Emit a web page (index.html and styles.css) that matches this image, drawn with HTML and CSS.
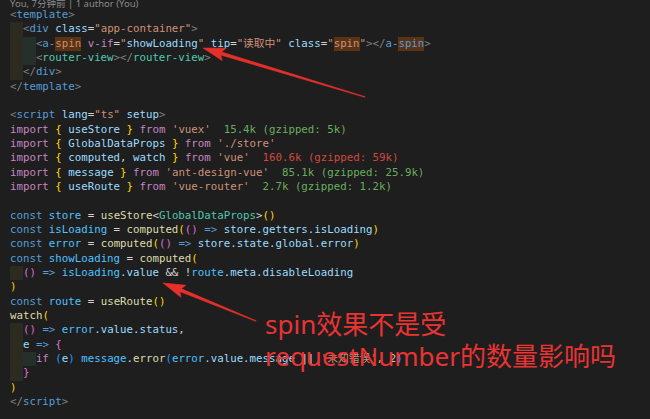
FILE: index.html
```html
<!DOCTYPE html>
<html lang="zh">
<head>
<meta charset="utf-8">
<link rel="stylesheet" href="styles.css">
</head>
<body>
<div class="editor">
<div class="lens">You, 7分钟前 | 1 author (You)</div>
<div class="ln"><span class="p">&lt;</span><span class="t">template</span><span class="p">&gt;</span></div>
<div class="ln"><span class="i1"></span><span class="p">&lt;</span><span class="t">div</span> <span class="a">class</span><span class="d">=</span><span class="s">"app-container"</span><span class="p">&gt;</span></div>
<div class="ln"><span class="i1"></span><span class="i2"></span><span class="p">&lt;</span><span class="t">a-</span><span class="hl hs">spin</span> <span class="k">v-if</span><span class="d">=</span><span class="s">"</span><span class="a">showLoading</span><span class="s">"</span> <span class="a">tip</span><span class="d">=</span><span class="s">"读取中"</span> <span class="a">class</span><span class="d">=</span><span class="s">"</span><span class="hl s">spin</span><span class="s">"</span><span class="p">&gt;&lt;/</span><span class="t">a-</span><span class="hl t">spin</span><span class="p">&gt;</span></div>
<div class="ln"><span class="i1"></span><span class="i2"></span><span class="p">&lt;</span><span class="ty">router-view</span><span class="p">&gt;&lt;/</span><span class="ty">router-view</span><span class="p">&gt;</span></div>
<div class="ln"><span class="i1"></span><span class="p">&lt;/</span><span class="t">div</span><span class="p">&gt;</span></div>
<div class="ln"><span class="p">&lt;/</span><span class="t">template</span><span class="p">&gt;</span></div>
<div class="ln"></div>
<div class="ln"><span class="p">&lt;</span><span class="t">script</span> <span class="a">lang</span><span class="d">=</span><span class="s">"ts"</span> <span class="a">setup</span><span class="p">&gt;</span></div>
<div class="ln"><span class="k">import</span> <span class="b1">{</span> <span class="a">useStore</span> <span class="b1">}</span> <span class="k">from</span> <span class="s">'vuex'</span>  <span class="g">15.4k (gzipped: 5k)</span></div>
<div class="ln"><span class="k">import</span> <span class="b1">{</span> <span class="a">GlobalDataProps</span> <span class="b1">}</span> <span class="k">from</span> <span class="s">'./store'</span></div>
<div class="ln"><span class="k">import</span> <span class="b1">{</span> <span class="a">computed</span><span class="d">,</span> <span class="a">watch</span> <span class="b1">}</span> <span class="k">from</span> <span class="s">'vue'</span>  <span class="r">160.6k (gzipped: 59k)</span></div>
<div class="ln"><span class="k">import</span> <span class="b1">{</span> <span class="a">message</span> <span class="b1">}</span> <span class="k">from</span> <span class="s">'ant-design-vue'</span>  <span class="g">85.1k (gzipped: 25.9k)</span></div>
<div class="ln"><span class="k">import</span> <span class="b1">{</span> <span class="a">useRoute</span> <span class="b1">}</span> <span class="k">from</span> <span class="s">'vue-router'</span>  <span class="g">2.7k (gzipped: 1.2k)</span></div>
<div class="ln"></div>
<div class="ln"><span class="t">const</span> <span class="cv">store</span> <span class="d">=</span> <span class="f">useStore</span><span class="d">&lt;</span><span class="ty">GlobalDataProps</span><span class="d">&gt;</span><span class="b1">()</span></div>
<div class="ln"><span class="t">const</span> <span class="cv">isLoading</span> <span class="d">=</span> <span class="f">computed</span><span class="b1">(</span><span class="b2">()</span> <span class="t">=&gt;</span> <span class="a">store.getters.isLoading</span><span class="b1">)</span></div>
<div class="ln"><span class="t">const</span> <span class="cv">error</span> <span class="d">=</span> <span class="f">computed</span><span class="b1">(</span><span class="b2">()</span> <span class="t">=&gt;</span> <span class="a">store.state.global.error</span><span class="b1">)</span></div>
<div class="ln"><span class="t">const</span> <span class="cv">showLoading</span> <span class="d">=</span> <span class="f">computed</span><span class="b1">(</span></div>
<div class="ln"><span class="i1"></span><span class="b2">()</span> <span class="t">=&gt;</span> <span class="cv">isLoading</span><span class="a">.value</span> <span class="d">&amp;&amp;</span> <span class="d">!</span><span class="cv">route</span><span class="a">.meta.disableLoading</span></div>
<div class="ln"><span class="b1">)</span></div>
<div class="ln"><span class="t">const</span> <span class="cv">route</span> <span class="d">=</span> <span class="f">useRoute</span><span class="b1">()</span></div>
<div class="ln"><span class="f">watch</span><span class="b1">(</span></div>
<div class="ln"><span class="i1"></span><span class="b2">()</span> <span class="t">=&gt;</span> <span class="cv">error</span><span class="a">.value.status</span><span class="d">,</span></div>
<div class="ln"><span class="i1"></span><span class="a">e</span> <span class="t">=&gt;</span> <span class="b2">{</span></div>
<div class="ln"><span class="i1"></span><span class="i2"></span><span class="k">if</span> <span class="b3">(</span><span class="a">e</span><span class="b3">)</span> <span class="cv">message</span><span class="d">.</span><span class="f">error</span><span class="b3">(</span><span class="cv">error</span><span class="a">.value.message</span> <span class="d">||</span> <span class="s">'未知错误'</span><span class="d">,</span> <span class="n">2</span><span class="b3">)</span></div>
<div class="ln"><span class="i1"></span><span class="b2">}</span></div>
<div class="ln"><span class="b1">)</span></div>
<div class="ln"><span class="p">&lt;/</span><span class="t">script</span><span class="p">&gt;</span></div>
</div>

<svg class="arrows" width="650" height="419" viewBox="0 0 650 419">
  <polygon points="203,48 222.2,60.6 220.2,53.2 226,48.2" />
  <polygon points="219.7,54.7 220.7,51.7 365.1,96.7 364.9,97.3" />
  <polygon points="163,283 180.9,297.3 179.7,289.8 185.9,285.3" />
  <polygon points="179.1,291.3 180.3,288.3 256.1,320.7 255.9,321.3" />
</svg>

<div class="note">
  <div>spin效果不是受</div>
  <div>requestNumber的数量影响吗</div>
</div>
</body>
</html>
```

FILE: styles.css
```css
html, body {
  margin: 0;
  padding: 0;
  background: #1e1e1e;
  overflow: hidden;
}

body {
  width: 650px;
  height: 419px;
  position: relative;
}

.editor {
  padding-left: 10px;
  font-family: "DejaVu Sans Mono", "Noto Sans CJK SC", monospace;
  font-size: 10.75px;
  color: #d4d4d4;
}

.lens {
  height: 8px;
  line-height: 8px;
  font-family: "Noto Sans", "Noto Sans CJK SC", sans-serif;
  font-size: 9.5px;
  color: #8c8c8c;
  white-space: nowrap;
  overflow: visible;
}

.ln {
  height: 14.33px;
  line-height: 14.33px;
  white-space: pre;
}

.i1, .i2 {
  display: inline-block;
  width: 2ch;
  height: 14.33px;
  vertical-align: top;
}
.i1 { background: #2c2b20; }
.i2 { background: #25302a; }

.p { color: #808080; }
.t { color: #569cd6; }
.a { color: #9cdcfe; }
.cv { color: #4fc1ff; }
.s { color: #ce9178; }
.d { color: #d4d4d4; }
.k { color: #c586c0; }
.f { color: #dcdcaa; }
.ty { color: #4ec9b0; }
.n { color: #b5cea8; }
.b1 { color: #ffd700; }
.b2 { color: #da70d6; }
.b3 { color: #179fff; }
.g { color: #6aad5e; }
.r { color: #d2483e; }

.hl {
  display: inline-block;
  height: 14.33px;
  vertical-align: top;
  background: #5a3315;
}
.hs { color: #d28a66; }

.arrows {
  position: absolute;
  left: 0;
  top: 0;
  pointer-events: none;
}
.arrows polygon {
  fill: #e8302b;
  stroke: #e8302b;
  stroke-width: 0.6;
  stroke-linejoin: round;
}

.note {
  position: absolute;
  left: 265px;
  top: 308px;
  font-family: "Noto Sans", "Noto Sans CJK SC", sans-serif;
  font-size: 26px;
  line-height: 32px;
  color: #ea3333;
  white-space: nowrap;
}
```
